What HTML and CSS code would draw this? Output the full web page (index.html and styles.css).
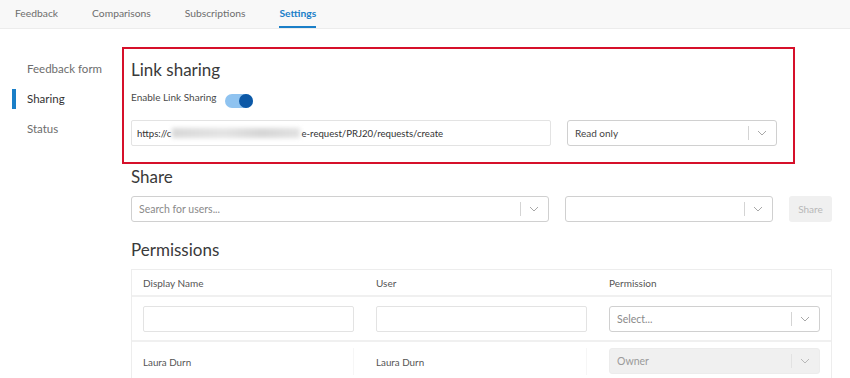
FILE: index.html
```html
<!DOCTYPE html>
<html>
<head>
<meta charset="utf-8">
<link rel="stylesheet" href="styles.css">
</head>
<body>
<header class="topnav">
  <a class="tab">Feedback</a>
  <a class="tab">Comparisons</a>
  <a class="tab">Subscriptions</a>
  <a class="tab active">Settings</a>
</header>
<div class="main">
  <nav class="sidebar">
    <div class="side-item">Feedback form</div>
    <div class="side-item active">Sharing</div>
    <div class="side-item">Status</div>
  </nav>
  <section class="content">
    <div class="highlight">
      <h2 class="title">Link sharing</h2>
      <div class="enable-row">
        <span class="enable-label">Enable Link Sharing</span>
        <span class="toggle"><span class="knob"></span></span>
      </div>
      <div class="field-row">
        <div class="input url">https://c<span class="blur"></span>e-request/PRJ20/requests/create</div>
        <div class="select readonly-sel"><span class="sel-text dark">Read only</span><span class="sep"></span><svg class="chev" viewBox="0 0 10 6" width="10" height="6"><path d="M1 1l4 4 4-4" fill="none" stroke="#a8a8a8" stroke-width="1"/></svg></div>
      </div>
    </div>
    <div class="pad">
      <h2 class="title share-title">Share</h2>
      <div class="share-row">
        <div class="select search"><span class="sel-text">Search for users...</span><span class="sep"></span><svg class="chev" viewBox="0 0 10 6" width="10" height="6"><path d="M1 1l4 4 4-4" fill="none" stroke="#a8a8a8" stroke-width="1"/></svg></div>
        <div class="select role"><span class="sel-text"></span><span class="sep"></span><svg class="chev" viewBox="0 0 10 6" width="10" height="6"><path d="M1 1l4 4 4-4" fill="none" stroke="#a8a8a8" stroke-width="1"/></svg></div>
        <button class="share-btn">Share</button>
      </div>
      <h2 class="title perm-title">Permissions</h2>
      <div class="table">
        <div class="row head">
          <div class="cell">Display Name</div>
          <div class="cell">User</div>
          <div class="cell">Permission</div>
        </div>
        <div class="row inputs">
          <div class="cell"><div class="tinput"></div></div>
          <div class="cell"><div class="tinput"></div></div>
          <div class="cell"><div class="select full"><span class="sel-text">Select...</span><span class="sep"></span><svg class="chev" viewBox="0 0 10 6" width="10" height="6"><path d="M1 1l4 4 4-4" fill="none" stroke="#a8a8a8" stroke-width="1"/></svg></div></div>
        </div>
        <div class="row data">
          <div class="cell"><div class="ro">Laura Durn</div></div>
          <div class="cell"><div class="ro">Laura Durn</div></div>
          <div class="cell"><div class="select full disabled"><span class="sel-text">Owner</span><span class="sep"></span><svg class="chev" viewBox="0 0 10 6" width="10" height="6"><path d="M1 1l4 4 4-4" fill="none" stroke="#b8b8b8" stroke-width="1"/></svg></div></div>
        </div>
      </div>
    </div>
  </section>
</div>
</body>
</html>
```
FILE: styles.css
```css
* { box-sizing: border-box; }
html, body { margin: 0; padding: 0; background: #fff; }
body {
  font-family: Lato, "Open Sans", "Liberation Sans", sans-serif;
  color: #3c3c3c;
  width: 850px;
  height: 378px;
  overflow: hidden;
}
.topnav {
  height: 29px;
  background: #f8f8f8;
  border-bottom: 1px solid #ececec;
  display: flex;
  align-items: stretch;
  padding-left: 15px;
}
.tab {
  font-size: 10.3px;
  color: #6d6d6d;
  display: flex;
  align-items: center;
  margin-right: 34px;
  border-bottom: 2px solid transparent;
  height: 28px;
}
.tab.active {
  color: #1a7fc8;
  font-weight: 700;
  border-bottom-color: #1a7fc8;
}
.main { display: flex; }
.sidebar {
  width: 122px;
  padding-top: 30px;
  display: flex;
  flex-direction: column;
  gap: 10px;
}
.side-item {
  margin-left: 12px;
  padding-left: 11px;
  border-left: 4px solid transparent;
  height: 20px;
  line-height: 20px;
  font-size: 11.5px;
  color: #6d6d6d;
}
.side-item.active { border-left-color: #1a7fc8; color: #333; }
.content { width: 728px; padding-top: 18px; }
.highlight {
  width: 673px;
  border: 2px solid #d6102a;
  padding: 9px 16px 16px 7px;
}
.title {
  margin: 0;
  font-size: 17px;
  font-weight: 400;
  line-height: 24px;
  color: #3a3a3a;
}
.enable-row {
  display: flex;
  align-items: center;
  height: 18px;
  margin-top: 8px;
}
.enable-label { font-size: 10px; color: #4a4a4a; position: relative; top: -2px; }
.toggle {
  margin-left: 9px;
  width: 28px;
  height: 14px;
  border-radius: 7px;
  background: #8fc3f0;
  position: relative;
  top: 2px;
}
.knob {
  position: absolute;
  right: 0;
  top: 0;
  width: 14px;
  height: 14px;
  border-radius: 50%;
  background: #0c58a6;
}
.field-row { display: flex; gap: 16px; margin-top: 12px; }
.input, .select, .tinput {
  height: 26px;
  border: 1px solid #e3e3e3;
  border-radius: 2px;
  background: #fff;
  font-size: 10.5px;
  display: flex;
  align-items: center;
}
.input.url { width: 420px; padding-left: 5px; color: #333; font-size: 9.6px; }
.blur {
  display: inline-block;
  width: 128px;
  height: 10px;
  background: linear-gradient(90deg, #d8d8d8, #e4e4e4 40%, #d6d6d6 70%, #e2e2e2);
  filter: blur(2px);
  margin: 0 1px;
}
.select { border-color: #d0d0d0; border-radius: 3px; padding-left: 7px; padding-right: 9px; }
.readonly-sel { width: 210px; }
.sel-text { flex: 1; color: #8a8a8a; }
.sel-text.dark { color: #444; font-size: 10px; }
.sep { width: 1px; height: 14px; background: #d4d4d4; margin-right: 8px; }
.chev { display: block; }
.pad { padding-left: 9px; }
.share-title { margin-top: 1px; }
.share-row { display: flex; gap: 16px; margin-top: 7px; }
.search { width: 418px; }
.role { width: 208px; }
.share-btn {
  width: 43px;
  height: 26px;
  border: none;
  border-radius: 3px;
  background: #f0f0f0;
  color: #b8b8b8;
  font-family: inherit;
  font-size: 10px;
  padding: 0;
}
.perm-title { margin-top: 16px; }
.table {
  width: 701px;
  margin-top: 7px;
  border: 1px solid #ededed;
  border-bottom: none;
}
.row { display: flex; }
.cell { width: 233.3px; padding: 0 11px; font-size: 10px; color: #555; }
.row.head { height: 27px; align-items: center; border-bottom: 2px solid #f0f0f0; }
.row.inputs { height: 45px; align-items: center; border-bottom: 2px solid #f0f0f0; }
.tinput { width: 100%; border-color: #e3e3e3; }
.select.full { width: 100%; }
.row.data { height: 40px; align-items: flex-start; padding-top: 6px; }
.ro {
  height: 27px;
  display: flex;
  align-items: center;
  border-right: 1px solid #f6f6f6;
  color: #555;
  font-size: 9.8px;
}
.select.disabled { background: #f0f0f0; border-color: #ececec; }
.select.disabled .sel-text { color: #9a9a9a; }
.select.disabled .sep { background: #e2e2e2; }
```
